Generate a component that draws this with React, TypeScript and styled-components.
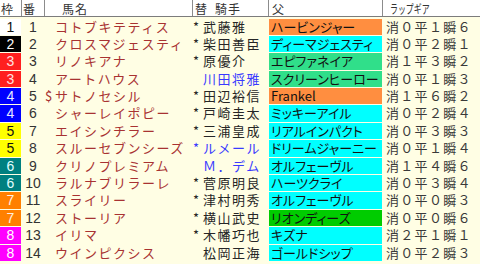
import React from "react"
import styled, { createGlobalStyle } from "styled-components"

const GlobalStyle = createGlobalStyle`
  html, body {
    margin: 0;
    padding: 0;
    background: #fffee4;
  }
`

const COLS = "21px 22px 147px 75px 113px 97px"
const CREAM = "#fffee4"

const WAKU: Record<number, { bg: string; fg: string }> = {
  1: { bg: "#ffffff", fg: "#111111" },
  2: { bg: "#000000", fg: "#ffffff" },
  3: { bg: "#ff1f1f", fg: "#ffe0e0" },
  4: { bg: "#0000ff", fg: "#e8e8ff" },
  5: { bg: "#ffff00", fg: "#111111" },
  6: { bg: "#008080", fg: "#e0ffff" },
  7: { bg: "#ff8000", fg: "#fff0e0" },
  8: { bg: "#ff00ff", fg: "#ffffff" },
}

const SIRE_BG = {
  orange: "#ff8e40",
  cyan: "#00ffff",
  mint: "#30df8a",
  green: "#00cc00",
}

type Horse = {
  waku: number
  no: number
  mark: string
  name: string
  jmark: string
  jockey: string
  blue?: boolean
  sire: string
  sc: keyof typeof SIRE_BG
  lap: string
}

const horses: Horse[] = [
  { waku: 1, no: 1, mark: "", name: "コトブキテティス", jmark: "*", jockey: "武藤雅", sire: "ハービンジャー", sc: "orange", lap: "消０平１瞬６" },
  { waku: 2, no: 2, mark: "", name: "クロスマジェスティ", jmark: "*", jockey: "柴田善臣", sire: "ディーマジェスティ", sc: "cyan", lap: "消０平２瞬１" },
  { waku: 3, no: 3, mark: "", name: "リノキアナ", jmark: "*", jockey: "原優介", sire: "エピファネイア", sc: "mint", lap: "消１平３瞬２" },
  { waku: 3, no: 4, mark: "", name: "アートハウス", jmark: "", jockey: "川田将雅", blue: true, sire: "スクリーンヒーロー", sc: "mint", lap: "消０平１瞬３" },
  { waku: 4, no: 5, mark: "$", name: "サトノセシル", jmark: "*", jockey: "田辺裕信", sire: "Frankel", sc: "orange", lap: "消１平６瞬２" },
  { waku: 4, no: 6, mark: "", name: "シャーレイポピー", jmark: "*", jockey: "戸崎圭太", sire: "ミッキーアイル", sc: "cyan", lap: "消０平２瞬４" },
  { waku: 5, no: 7, mark: "", name: "エイシンチラー", jmark: "*", jockey: "三浦皇成", sire: "リアルインパクト", sc: "cyan", lap: "消０平３瞬３" },
  { waku: 5, no: 8, mark: "", name: "スルーセブンシーズ", jmark: "*", jockey: "ルメール", blue: true, sire: "ドリームジャーニー", sc: "cyan", lap: "消０平１瞬４" },
  { waku: 6, no: 9, mark: "", name: "クリノプレミアム", jmark: "", jockey: "Ｍ．デム", blue: true, sire: "オルフェーヴル", sc: "cyan", lap: "消１平４瞬６" },
  { waku: 6, no: 10, mark: "", name: "ラルナブリラーレ", jmark: "*", jockey: "菅原明良", sire: "ハーツクライ", sc: "cyan", lap: "消０平３瞬４" },
  { waku: 7, no: 11, mark: "", name: "スライリー", jmark: "*", jockey: "津村明秀", sire: "オルフェーヴル", sc: "cyan", lap: "消０平０瞬３" },
  { waku: 7, no: 12, mark: "", name: "ストーリア", jmark: "*", jockey: "横山武史", sire: "リオンディーズ", sc: "green", lap: "消０平０瞬６" },
  { waku: 8, no: 13, mark: "", name: "イリマ", jmark: "*", jockey: "木幡巧也", sire: "キズナ", sc: "cyan", lap: "消２平１瞬１" },
  { waku: 8, no: 14, mark: "", name: "ウインピクシス", jmark: "", jockey: "松岡正海", sire: "ゴールドシップ", sc: "cyan", lap: "消０平２瞬３" },
]

const Page = styled.div`
  width: 480px;
  height: 264px;
  background: ${CREAM};
  font-family: "Noto Sans CJK JP", "Noto Sans", sans-serif;
`

const HeaderRow = styled.div`
  display: grid;
  grid-template-columns: ${COLS};
  column-gap: 1px;
  height: 16px;
  background: #8c8c8c;
  border-bottom: 1px solid #7c7c7c;
`

const HeaderCell = styled.div<{ $pad?: number }>`
  background: #ffffff;
  color: #333333;
  font-size: 12px;
  letter-spacing: 1px;
  line-height: 14px;
  padding-top: 2px;
  padding-left: ${(p) => p.$pad ?? 1}px;
  white-space: nowrap;
`

const Gap = styled.span<{ $w: number }>`
  display: inline-block;
  width: ${(p) => p.$w}px;
`

const Narrow = styled.span`
  display: inline-block;
  letter-spacing: 0;
  transform: scaleX(0.66);
  transform-origin: left center;
`

const Body = styled.div`
  display: flex;
  flex-direction: column;
  gap: 1px;
  padding-top: 1.5px;
`

const Row = styled.div`
  display: grid;
  grid-template-columns: ${COLS};
  column-gap: 1px;
  height: 16.4px;
  font-size: 13px;
  line-height: 16.4px;
  white-space: nowrap;
`

const WakuCell = styled.div<{ $bg: string; $fg: string }>`
  background: ${(p) => p.$bg};
  color: ${(p) => p.$fg};
  text-align: center;
  font-family: "Liberation Sans", sans-serif;
  font-size: 14px;
`

const NumCell = styled.div`
  color: #333333;
  text-align: center;
  font-family: "Liberation Sans", sans-serif;
  font-size: 14px;
`

const Mark = styled.span<{ $w: number }>`
  display: inline-block;
  width: ${(p) => p.$w}px;
  letter-spacing: 0;
`

const NameCell = styled.div`
  color: #a83232;
  letter-spacing: 1.5px;
`

const JockeyCell = styled.div<{ $blue?: boolean }>`
  color: ${(p) => (p.$blue ? "#3a3aff" : "#262626")};
  letter-spacing: 1.5px;
`

const SireCell = styled.div<{ $bg: string }>`
  background: ${(p) => p.$bg};
  color: #111111;
  padding-left: 2px;
  font-feature-settings: "palt";
`

const LapCell = styled.div`
  color: #3a3a3a;
  padding-left: 3px;
  letter-spacing: 1.3px;
`

export default function App() {
  return (
    <Page>
      <GlobalStyle />
      <HeaderRow>
        <HeaderCell>枠</HeaderCell>
        <HeaderCell>番</HeaderCell>
        <HeaderCell $pad={17}>馬名</HeaderCell>
        <HeaderCell $pad={2}>
          替<Gap $w={7} />騎手
        </HeaderCell>
        <HeaderCell $pad={3}>父</HeaderCell>
        <HeaderCell $pad={7}>
          <Narrow>ラップギア</Narrow>
        </HeaderCell>
      </HeaderRow>
      <Body>
        {horses.map((h) => (
          <Row key={h.no}>
            <WakuCell $bg={WAKU[h.waku].bg} $fg={WAKU[h.waku].fg}>
              {h.waku}
            </WakuCell>
            <NumCell>{h.no}</NumCell>
            <NameCell>
              <Mark $w={10}>{h.mark}</Mark>
              {h.name}
            </NameCell>
            <JockeyCell $blue={h.blue}>
              <Mark $w={10}>{h.jmark}</Mark>
              {h.jockey}
            </JockeyCell>
            <SireCell $bg={SIRE_BG[h.sc]}>{h.sire}</SireCell>
            <LapCell>{h.lap}</LapCell>
          </Row>
        ))}
      </Body>
    </Page>
  )
}
